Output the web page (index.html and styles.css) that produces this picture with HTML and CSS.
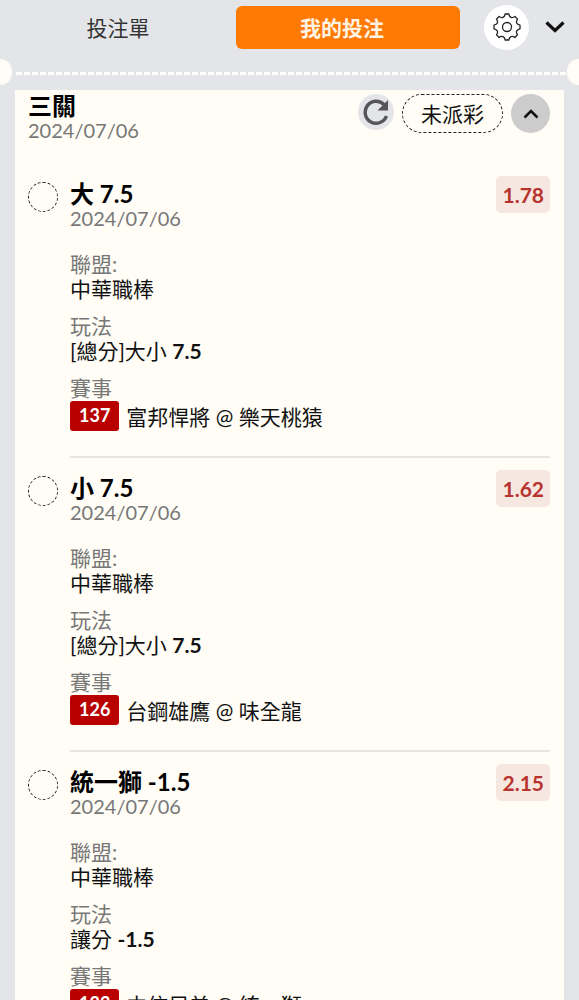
FILE: index.html
```html
<!DOCTYPE html>
<html lang="zh-Hant">
<head>
<meta charset="utf-8">
<meta name="viewport" content="width=device-width, initial-scale=1">
<title>我的投注</title>
<link rel="stylesheet" href="styles.css">
</head>
<body>
<div class="panel">
  <header class="topbar">
    <nav class="tabs">
      <button class="tab" type="button">投注單</button>
      <button class="tab tab-active" type="button">我的投注</button>
    </nav>
    <button class="gear" type="button" aria-label="設定">
      <svg width="30" height="30" viewBox="-15 -15 30 30" fill="none" stroke="#222" stroke-width="1.3" stroke-linejoin="round"><path d="M-1.8-13L1.8-13C2.6-9.400 4.800-8.500 7.900-10.500L10.500-7.900C8.500-4.800 9.400-2.600 13-1.800L13 1.800C9.400 2.600 8.500 4.800 10.500 7.900L7.900 10.500C4.800 8.500 2.600 9.400 1.800 13L-1.800 13C-2.600 9.400-4.800 8.500-7.900 10.500L-10.500 7.900C-8.500 4.800-9.400 2.600-13 1.800L-13-1.800C-9.400-2.600-8.500-4.800-10.500-7.900L-7.900-10.500C-4.800-8.500-2.600-9.400-1.800-13Z"/><circle r="4.5"/></svg>
    </button>
    <button class="collapse" type="button" aria-label="收合">
      <svg width="20" height="14" viewBox="0 0 20 14" fill="none" stroke="#111" stroke-width="3.2"><path d="M1.500 2.500 10 10.500 18.500 2.500"/></svg>
    </button>
  </header>
  <div class="perforation"><span class="notch"></span><span class="stitches"></span><span class="notch notch-right"></span></div>
  <main class="ticket">
    <div class="ticket-head">
      <div class="ticket-name">
        <h1 class="title">三關</h1>
        <time class="date">2024/07/06</time>
      </div>
      <button class="refresh" type="button" aria-label="重新整理">
        <svg width="28" height="28" viewBox="0 0 28 28"><path d="M24.500 18A11 11 0 1 1 22 6.500" fill="none" stroke="#555558" stroke-width="3.400"/><path d="M26 2v10.500H15.500z" fill="#555558"/></svg>
      </button>
      <button class="status" type="button">未派彩</button>
      <button class="fold" type="button" aria-label="收起">
        <svg width="16" height="12" viewBox="0 0 16 12" fill="none" stroke="#111" stroke-width="2.600"><path d="M1.500 9.500 8 3l6.500 6.500"/></svg>
      </button>
    </div>

    <article class="bet">
      <span class="ring"></span>
      <div class="bet-body">
        <div class="bet-head">
          <div class="bet-name"><h2 class="title">大 7.5</h2><time class="date">2024/07/06</time></div>
          <span class="odds">1.78</span>
        </div>
        <dl class="details">
          <div><dt>聯盟:</dt><dd>中華職棒</dd></div>
          <div><dt>玩法</dt><dd>[總分]大小 <b>7.5</b></dd></div>
          <div><dt>賽事</dt><dd class="match"><span class="tag">137</span>富邦悍將 @ 樂天桃猿</dd></div>
        </dl>
      </div>
    </article>

    <article class="bet">
      <span class="ring"></span>
      <div class="bet-body">
        <div class="bet-head">
          <div class="bet-name"><h2 class="title">小 7.5</h2><time class="date">2024/07/06</time></div>
          <span class="odds">1.62</span>
        </div>
        <dl class="details">
          <div><dt>聯盟:</dt><dd>中華職棒</dd></div>
          <div><dt>玩法</dt><dd>[總分]大小 <b>7.5</b></dd></div>
          <div><dt>賽事</dt><dd class="match"><span class="tag">126</span>台鋼雄鷹 @ 味全龍</dd></div>
        </dl>
      </div>
    </article>

    <article class="bet">
      <span class="ring"></span>
      <div class="bet-body">
        <div class="bet-head">
          <div class="bet-name"><h2 class="title">統一獅 -1.5</h2><time class="date">2024/07/06</time></div>
          <span class="odds">2.15</span>
        </div>
        <dl class="details">
          <div><dt>聯盟:</dt><dd>中華職棒</dd></div>
          <div><dt>玩法</dt><dd>讓分 <b>-1.5</b></dd></div>
          <div><dt>賽事</dt><dd class="match"><span class="tag">133</span>中信兄弟 @ 統一獅</dd></div>
        </dl>
      </div>
    </article>
  </main>
</div>
</body>
</html>
```
FILE: styles.css
```css
* { box-sizing: border-box; }

body {
  margin: 0;
  background: #e4e5e8;
  color: #111;
  font: 21px/25px Lato, "Noto Sans CJK TC", sans-serif;
}

button {
  border: 0;
  padding: 0;
  background: none;
  color: inherit;
  font: inherit;
  cursor: pointer;
}

svg { display: block; }

.panel {
  height: 100vh;
  overflow: hidden;
}

.topbar {
  display: flex;
  align-items: center;
  height: 54px;
  padding-right: 14px;
}

.tabs {
  flex: 1;
  display: flex;
}

.tab {
  flex: 1;
  height: 43px;
  border-radius: 6px;
  color: #333;
}

.tab-active {
  flex: 0 0 224px;
  padding-right: 12px;
  background: #ff7a05;
  color: #fff3e4;
  font-weight: 700;
}

.gear {
  display: grid;
  place-items: center;
  width: 45px;
  height: 45px;
  margin: 0 16px 0 24px;
  border-radius: 50%;
  background: #fff;
}

.perforation {
  display: flex;
  align-items: center;
  height: 36px;
}

.notch {
  width: 12px;
  height: 26px;
  border-radius: 0 13px 13px 0;
  background: #fffdf5;
}

.notch-right { border-radius: 13px 0 0 13px; }

.stitches {
  flex: 1;
  height: 3px;
  margin: 2px 1px 0 4px;
  background: repeating-linear-gradient(90deg, #fffefa 0 6px, transparent 6px 8px);
}

.ticket {
  margin: 0 15px;
  padding: 4px 14px 0 13px;
  background: #fffdf5;
}

.ticket-head {
  display: flex;
  align-items: flex-start;
  margin-bottom: 43px;
  height: 39px;
}

.ticket-name {
  flex: 1;
  margin-top: -1px;
}

.title {
  margin: 0;
  color: #000;
  font-size: 24px;
  line-height: 25px;
  font-weight: 700;
}

.date {
  display: block;
  color: #777;
  font-size: 20px;
}

.refresh,
.fold {
  display: grid;
  place-items: center;
  border-radius: 50%;
}

.refresh {
  width: 36px;
  height: 36px;
  background: #e4e5e8;
}

.status {
  height: 39px;
  margin: 0 8px;
  padding: 0 18px;
  border: 1px dashed #222;
  border-radius: 20px;
}

.fold {
  width: 39px;
  height: 39px;
  background: #ccc;
}

.bet {
  display: flex;
  gap: 12px;
  margin-bottom: 12px;
}

.ring {
  flex: none;
  width: 30px;
  height: 30px;
  margin-top: 6px;
  border: 1px dashed #222;
  border-radius: 50%;
}

.bet-body {
  flex: 1;
  padding-bottom: 25px;
  border-bottom: 2px solid #e8e5e1;
}

.bet-head {
  display: flex;
  justify-content: space-between;
  align-items: flex-start;
  margin-bottom: 20px;
}

.bet-name { padding-top: 5px; }

.odds {
  padding: 6px;
  border-radius: 5px;
  background: #f7e7e1;
  color: #b7342e;
  font-weight: 700;
}

.details {
  display: grid;
  gap: 12px;
  margin: 0;
}

dt { color: #777; }

dd { margin: 0; }

.match {
  display: flex;
  align-items: center;
  gap: 7px;
  margin-top: 1px;
}

.tag {
  padding: 2px 9px 3px;
  border-radius: 3px;
  background: #b80000;
  color: #fff;
  font-size: 18px;
  font-weight: 700;
}
```
